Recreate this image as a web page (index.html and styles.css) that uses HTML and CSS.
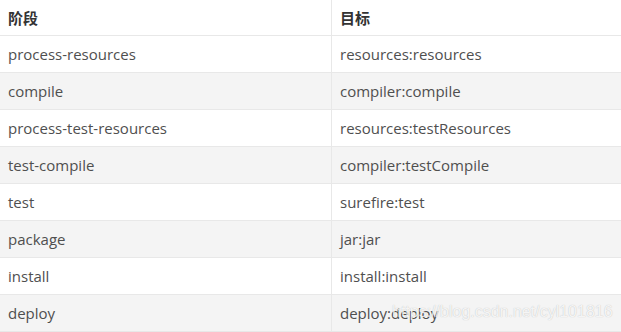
FILE: index.html
```html
<!DOCTYPE html>
<html lang="zh-CN">
<head>
    <meta charset="UTF-8">
    <title>阶段与目标</title>
    <link rel="stylesheet" href="styles.css">
</head>
<body>
    <div class="wrap">
        <table class="phase-table">
            <thead>
                <tr><th>阶段</th><th>目标</th></tr>
            </thead>
            <tbody>
                <tr><td>process-resources</td><td>resources:resources</td></tr>
                <tr><td>compile</td><td>compiler:compile</td></tr>
                <tr><td>process-test-resources</td><td>resources:testResources</td></tr>
                <tr><td>test-compile</td><td>compiler:testCompile</td></tr>
                <tr><td>test</td><td>surefire:test</td></tr>
                <tr><td>package</td><td>jar:jar</td></tr>
                <tr><td>install</td><td>install:install</td></tr>
                <tr><td>deploy</td><td>deploy:deploy</td></tr>
            </tbody>
        </table>
        <!-- 水印 -->
        <span class="watermark">https://blog.csdn.net/cyl101816</span>
    </div>
</body>
</html>
```

FILE: styles.css
```css
body {
    margin: 0;
    background: #fff;
    font-family: "Open Sans", "Noto Sans CJK SC", sans-serif;
    color: #4f4f4f;
}

.wrap {
    position: relative;
    width: 621px;
    height: 332px;
    overflow: hidden;
}

.phase-table {
    width: 640px;
    border-collapse: collapse;
    font-size: 15px;
}

.phase-table th,
.phase-table td {
    text-align: left;
    padding: 0 8px;
    border-bottom: 1px solid #e8e8e8;
}

.phase-table th {
    height: 35px;
    font-family: "Noto Sans CJK SC", sans-serif;
    font-weight: bold;
    color: #333;
}

.phase-table td {
    height: 36px;
}

.phase-table th:first-child,
.phase-table td:first-child {
    width: 315px;
    border-right: 1px solid #e8e8e8;
}

.phase-table tbody tr:nth-child(even) {
    background: #f4f4f4;
}

.watermark {
    position: absolute;
    left: 392px;
    top: 303px;
    font-family: "Liberation Sans", sans-serif;
    font-size: 16px;
    color: rgba(255, 255, 255, 0.85);
    text-shadow: 0 0 1px rgba(0, 0, 0, 0.25);
}
```
